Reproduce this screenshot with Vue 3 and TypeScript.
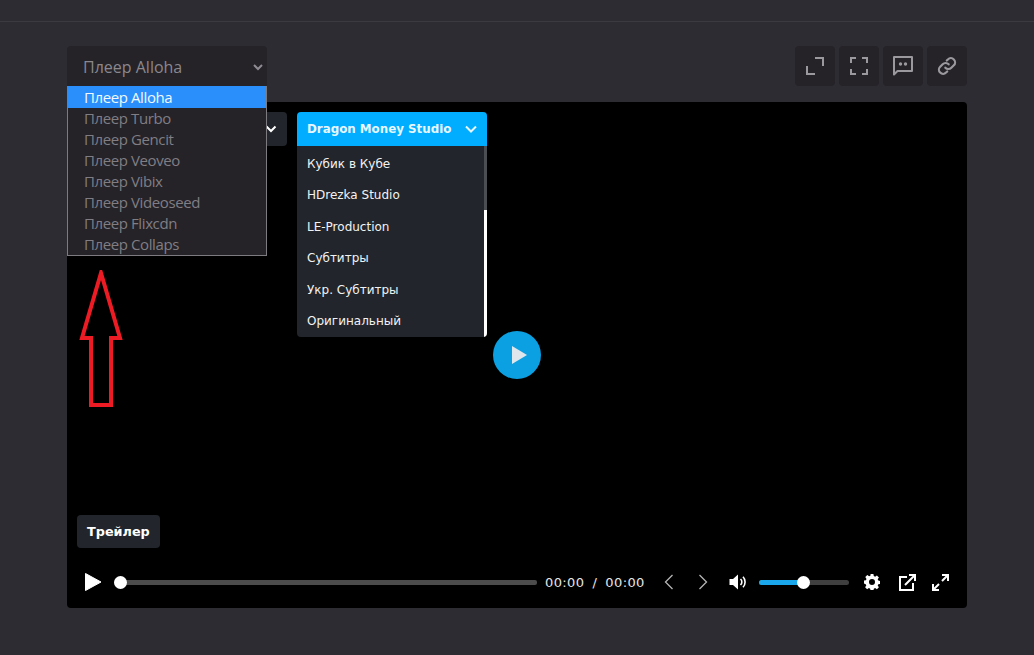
<script setup lang="ts">
const players = ['Alloha', 'Turbo', 'Gencit', 'Veoveo', 'Vibix', 'Videoseed', 'Flixcdn', 'Collaps']
const voices = ['Кубик в Кубе', 'HDrezka Studio', 'LE-Production', 'Субтитры', 'Укр. Субтитры', 'Оригинальный']
</script>

<template>
  <div class="page">
    <div class="topbar"></div>
    <main class="content">
      <div class="toolbar">
        <div class="select-wrap">
          <div class="select">
            <span>Плеер Alloha</span>
            <svg width="12" height="12" viewBox="0 0 12 12" fill="none" stroke="#8e8c92" stroke-width="2">
              <path d="M2 4l4 4 4-4" />
            </svg>
          </div>
          <ul class="select-list">
            <li v-for="(name, index) in players" :key="name" :class="{ active: index === 0 }">Плеер {{ name }}</li>
          </ul>
        </div>
        <div class="actions">
          <button class="action">
            <svg width="20" height="20" viewBox="0 0 20 20" fill="none" stroke="#9b999e" stroke-width="2">
              <path d="M10 2h8v8M2 10v8h8" />
            </svg>
          </button>
          <button class="action">
            <svg width="20" height="20" viewBox="0 0 20 20" fill="none" stroke="#9b999e" stroke-width="2">
              <path d="M7 2H2v5M13 2h5v5M2 13v5h5M18 13v5h-5" />
            </svg>
          </button>
          <button class="action">
            <svg width="22" height="22" viewBox="0 0 22 22" fill="none">
              <path d="M2 2h18v14H5.500L2 19.500z" stroke="#9b999e" stroke-width="2" stroke-linejoin="round" />
              <circle cx="8.500" cy="9" r="1.700" fill="#9b999e" />
              <circle cx="13.500" cy="9" r="1.700" fill="#9b999e" />
            </svg>
          </button>
          <button class="action">
            <svg width="20" height="20" viewBox="0 0 24 24" fill="none" stroke="#9b999e" stroke-width="2.600" stroke-linecap="round">
              <path d="M10 14a5 5 0 0 0 7.200.2l3-3a5 5 0 0 0-7.100-7.100l-1.400 1.400" />
              <path d="M14 10a5 5 0 0 0-7.200-.2l-3 3a5 5 0 0 0 7.100 7.100l1.400-1.400" />
            </svg>
          </button>
        </div>
      </div>

      <section class="player">
        <div class="voices">
          <div class="voice-btn">
            <svg width="12" height="12" viewBox="0 0 12 12" fill="none" stroke="#fff" stroke-width="2">
              <path d="M1.500 3.500L6 8l4.500-4.500" />
            </svg>
          </div>
          <div class="voice-select">
            <div class="voice-btn voice-btn--open">
              <span>Dragon Money Studio</span>
              <svg width="12" height="12" viewBox="0 0 12 12" fill="none" stroke="#e8f7ff" stroke-width="2">
                <path d="M1 3.500L6 8.500l5-5" />
              </svg>
            </div>
            <div class="voice-menu">
              <ul>
                <li v-for="voice in voices" :key="voice">{{ voice }}</li>
              </ul>
              <div class="scrollbar"><div class="scrollbar-thumb"></div></div>
            </div>
          </div>
        </div>

        <div class="big-play">
          <svg width="16" height="18" viewBox="0 0 16 18"><path d="M1 0l15 9-15 9z" fill="#dfe7ec" /></svg>
        </div>

        <div class="trailer">Трейлер</div>

        <div class="controls">
          <svg class="play" width="16" height="18" viewBox="0 0 16 18"><path d="M0.500 0.500L16 9 0.500 17.500z" fill="#fff" stroke="#fff" stroke-linejoin="round" /></svg>
          <div class="timeline"><span class="thumb"></span></div>
          <span class="time">00:00 / 00:00</span>
          <svg class="nav" width="12" height="16" viewBox="0 0 12 16" fill="none" stroke="#b5b5b5" stroke-width="1.300">
            <path d="M9.500 1L2.500 8l7 7" />
          </svg>
          <svg class="nav nav--next" width="12" height="16" viewBox="0 0 12 16" fill="none" stroke="#b5b5b5" stroke-width="1.300">
            <path d="M2.500 1l7 7-7 7" />
          </svg>
          <svg class="volume-icon" width="20" height="16" viewBox="0 0 20 16" fill="none">
            <path d="M0.500 5H4L9 0.500v15L4 11H0.500z" fill="#fff" />
            <path d="M11.500 5a4 4 0 0 1 0 6" stroke="#fff" stroke-width="1.600" />
            <path d="M14 2.800a7.500 7.500 0 0 1 0 10.400" stroke="#fff" stroke-width="1.600" />
          </svg>
          <div class="volume">
            <div class="volume-fill"></div>
            <span class="volume-thumb"></span>
          </div>
          <svg class="gear" width="16" height="16" viewBox="0 0 16 16">
            <path
              fill="#fff"
              fill-rule="evenodd"
              d="M6.600 0h2.800l.4 2.100 1.300.6 1.800-1.200 2 2-1.200 1.800.6 1.300 2.100.4v2.800l-2.100.4-.6 1.300 1.200 1.800-2 2-1.800-1.200-1.300.6-.4 2.100H6.600l-.4-2.100-1.300-.6-1.800 1.200-2-2 1.200-1.800-.6-1.300L-.2 9.400V6.600l2.100-.4.6-1.300-1.200-1.800 2-2 1.800 1.200 1.300-.6zM8 5a3 3 0 1 0 0 6 3 3 0 0 0 0-6z"
            />
          </svg>
          <svg class="share" width="17" height="17" viewBox="0 0 17 17" fill="none" stroke="#fff" stroke-width="2">
            <path d="M8 3H1v13h13V9" />
            <path d="M6 11L15.500 1.500M10 1h6v6" />
          </svg>
          <svg class="full" width="17" height="17" viewBox="0 0 17 17" fill="none" stroke="#fff" stroke-width="2">
            <path d="M10 1h6v6M16 1l-6 6M7 16H1v-6M1 16l6-6" />
          </svg>
        </div>
      </section>
    </main>

    <svg class="annotation" width="44" height="140" viewBox="0 0 44 140" fill="none">
      <path d="M22 3L41 68H32V135H12V68H3z" stroke="#ed1c24" stroke-width="4" />
    </svg>
  </div>
</template>

<style>
html,
body {
  margin: 0;
  background: #2e2c33;
}
</style>

<style scoped>
.page {
  position: relative;
  width: 1034px;
  height: 655px;
  overflow: hidden;
  background: #2e2c33;
}

.topbar {
  height: 21px;
  border-bottom: 1px solid #3c3a41;
}

.content {
  padding: 24px 67px 0;
}

.toolbar {
  display: flex;
  justify-content: space-between;
  height: 40px;
}

.select-wrap {
  position: relative;
  width: 200px;
  z-index: 2;
}

.select {
  display: flex;
  align-items: center;
  justify-content: space-between;
  height: 40px;
  padding: 1px 3px 0 16px;
  box-sizing: border-box;
  background: #252328;
  border-radius: 4px 4px 0 0;
  color: #8a888e;
  font: 16px "Open Sans", "Noto Sans", sans-serif;
}

.select-list {
  position: absolute;
  top: 40px;
  left: 0;
  width: 200px;
  box-sizing: border-box;
  margin: 0;
  padding: 0;
  list-style: none;
  background: #252328;
  border: 1px solid #7d7b80;
  border-top: none;
  font: 15px/21px "Open Sans", "Noto Sans", sans-serif;
  letter-spacing: -0.4px;
  color: #807e84;
}

.select-list li {
  padding-left: 16px;
}

.select-list li.active {
  padding-top: 1px;
  background: #2a8ffb;
  color: #f2f8ff;
}

.actions {
  display: flex;
  gap: 4px;
}

.action {
  display: flex;
  align-items: center;
  justify-content: center;
  width: 40px;
  height: 40px;
  padding: 0;
  border: none;
  border-radius: 4px;
  background: #252328;
}

.player {
  position: relative;
  display: flex;
  flex-direction: column;
  height: 506px;
  margin-top: 16px;
  background: #000;
  border-radius: 4px;
}

.voices {
  display: flex;
  gap: 10px;
  padding: 10px 10px 0;
  height: 227px;
  box-sizing: border-box;
}

.voice-btn {
  display: flex;
  align-items: center;
  justify-content: flex-end;
  width: 210px;
  height: 34px;
  padding: 0 10px;
  box-sizing: border-box;
  background: #22262c;
  border-radius: 4px;
}

.voice-select {
  width: 190px;
}

.voice-btn--open {
  justify-content: space-between;
  width: 190px;
  background: #00adff;
  border-radius: 4px 4px 0 0;
  color: #e8f7ff;
  font: bold 11.850px "DejaVu Sans", Verdana, sans-serif;
}

.voice-menu {
  display: flex;
  height: 191px;
  overflow: hidden;
  background: #22262c;
  border-radius: 0 0 4px 4px;
}

.voice-menu ul {
  flex: 1;
  margin: 0;
  padding: 2.500px 0 0 10px;
  list-style: none;
  color: #f2f2f2;
  font: 12px/31.600px "DejaVu Sans", Verdana, sans-serif;
}

.scrollbar {
  width: 3px;
  background: #fff;
}

.scrollbar-thumb {
  height: 64px;
  background: #4b4e53;
}

.big-play {
  position: absolute;
  top: 229px;
  left: 426px;
  display: flex;
  align-items: center;
  justify-content: center;
  width: 48px;
  height: 48px;
  padding-left: 3px;
  box-sizing: border-box;
  border-radius: 50%;
  background: #0ba0e2;
}

.trailer {
  align-self: flex-start;
  margin: 186px 0 0 10px;
  padding: 0 10px;
  height: 33px;
  background: #22262c;
  border-radius: 4px;
  color: #fff;
  font: bold 12.800px/33px "DejaVu Sans", Verdana, sans-serif;
}

.controls {
  display: flex;
  align-items: center;
  height: 18px;
  margin-top: 25px;
  padding-left: 18px;
  color: #e6e6e6;
}

.timeline {
  position: relative;
  width: 423px;
  height: 5px;
  margin: 1px 0 0 13px;
  background: #4c4c4c;
  border-radius: 2px;
}

.thumb {
  position: absolute;
  top: -4px;
  left: 0;
  width: 13px;
  height: 13px;
  border-radius: 50%;
  background: #fff;
}

.time {
  width: 100px;
  margin-left: 8px;
  font: 13px "DejaVu Sans", Verdana, sans-serif;
  letter-spacing: 0.4px;
  word-spacing: 3.500px;
  white-space: nowrap;
}

.nav {
  margin-left: 18px;
}

.nav--next {
  margin-left: 22px;
}

.volume-icon {
  margin-left: 20px;
}

.volume {
  position: relative;
  width: 90px;
  height: 5px;
  margin-left: 10px;
  background: #3f3f3f;
  border-radius: 3px;
}

.volume-fill {
  width: 44px;
  height: 100%;
  background: #1aa7ec;
  border-radius: 3px;
}

.volume-thumb {
  position: absolute;
  top: -4px;
  left: 38px;
  width: 13px;
  height: 13px;
  border-radius: 50%;
  background: #fff;
}

.gear {
  margin-left: 15px;
}

.share {
  margin-left: 19px;
}

.full {
  margin-left: 16px;
}

.annotation {
  position: absolute;
  top: 270px;
  left: 79px;
}
</style>
